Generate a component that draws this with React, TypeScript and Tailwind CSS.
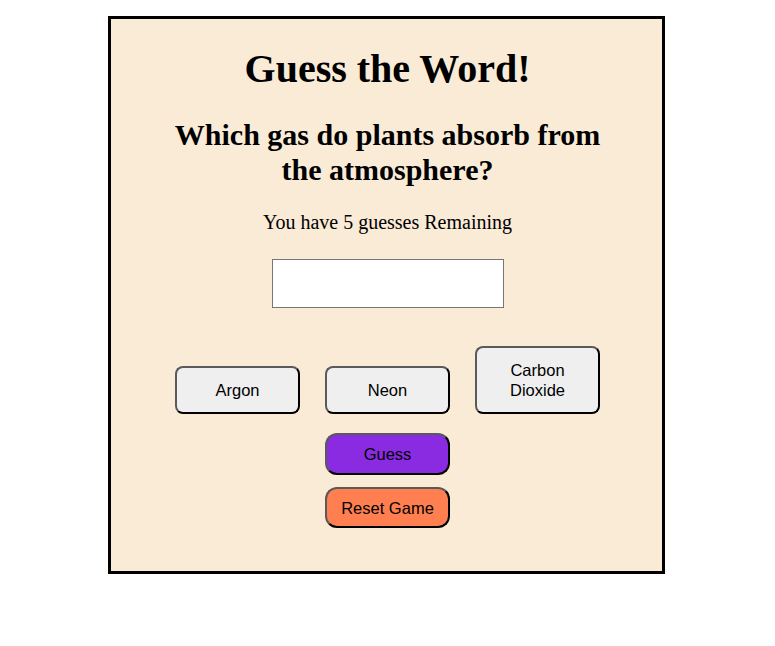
import React, { useState } from 'react'

const options = ['Argon', 'Neon', 'Carbon Dioxide']

function App() {
  const [guess, setGuess] = useState('')
  const [remaining, setRemaining] = useState(5)

  return (
    <div className="min-h-[646px] bg-white pt-[16px]">
      <div className="ml-[108px] w-[557px] border-[3px] border-black bg-[#faebd7] pl-[2px] pt-[27px] pb-[43px] flex flex-col items-center">
        <h1 className="font-['Liberation_Serif',serif] text-[40px] leading-[46px] font-bold text-black">
          Guess the Word!
        </h1>
        <h2 className="mt-[25px] w-[460px] text-center font-['Liberation_Serif',serif] text-[30px] leading-[35px] font-bold text-black">
          Which gas do plants absorb from the atmosphere?
        </h2>
        <p className="mt-[24px] font-['Liberation_Serif',serif] text-[20px] leading-[23px] text-black">
          You have {remaining} guesses Remaining
        </p>
        <input
          value={guess}
          onChange={(e) => setGuess(e.target.value)}
          className="mt-[25px] w-[232px] h-[49px] border border-[#767676] bg-white px-2 font-['Liberation_Sans',sans-serif] outline-none"
        />
        <div className="mt-[38px] flex items-end gap-[25px]">
          {options.map((opt) => (
            <button
              key={opt}
              onClick={() => setGuess(opt)}
              className="w-[125px] rounded-[8px] border-2 border-t-[#5a5a5a] border-l-[#5a5a5a] border-r-black border-b-black bg-[#efefef] px-5 py-3 font-['Liberation_Sans',sans-serif] text-[16.5px] leading-[20px] text-black"
            >
              {opt}
            </button>
          ))}
        </div>
        <button
          onClick={() => setRemaining(Math.max(0, remaining - 1))}
          className="mt-[19px] w-[125px] rounded-[12px] border-2 border-t-[#5a5a5a] border-l-[#5a5a5a] border-r-black border-b-black bg-[#8a2be2] py-[9px] font-['Liberation_Sans',sans-serif] text-[16.5px] leading-[20px] text-black"
        >
          Guess
        </button>
        <button
          onClick={() => {
            setRemaining(5)
            setGuess('')
          }}
          className="mt-[12px] w-[125px] rounded-[12px] border-2 border-t-[#5a5a5a] border-l-[#5a5a5a] border-r-black border-b-black bg-[#ff7f50] py-[8.5px] font-['Liberation_Sans',sans-serif] text-[16.5px] leading-[20px] text-black"
        >
          Reset Game
        </button>
      </div>
    </div>
  )
}

export default App
